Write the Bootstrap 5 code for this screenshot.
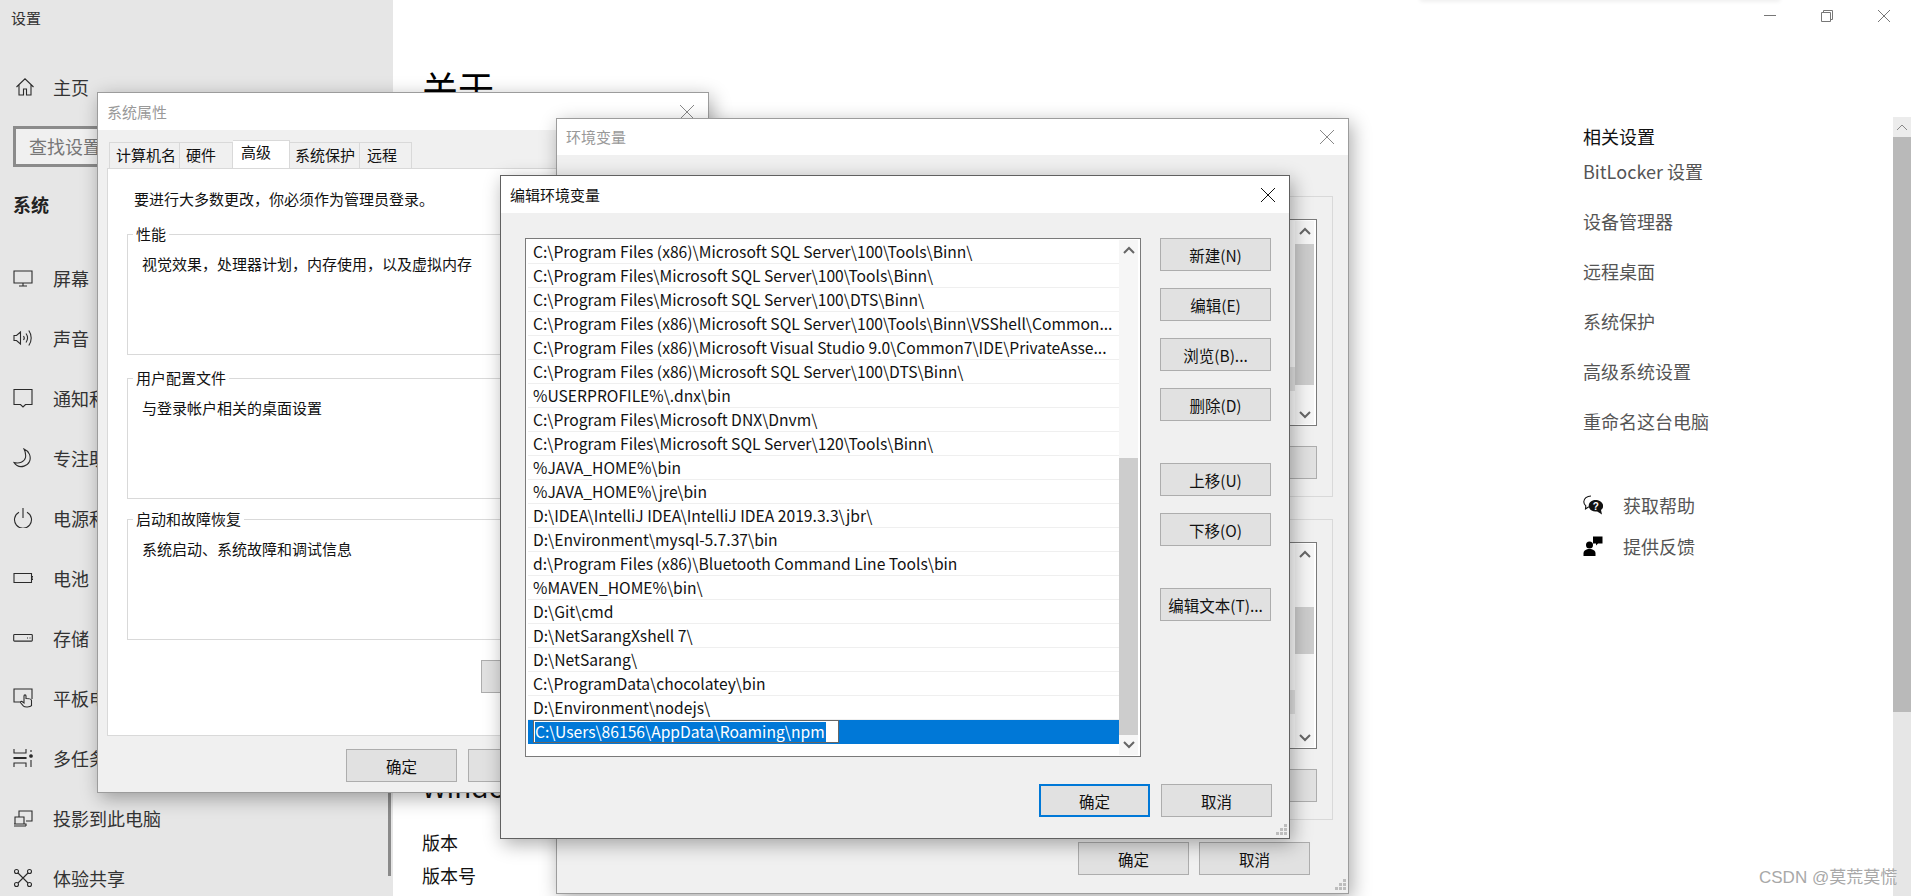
<!DOCTYPE html>
<html lang="zh-CN">
<head>
<meta charset="utf-8">
<title>设置</title>
<link href="https://cdn.jsdelivr.net/npm/bootstrap@5.3.0/dist/css/bootstrap.min.css" rel="stylesheet">
<style>
html,body{height:100%;margin:0;overflow:hidden}
body{font-family:"Noto Sans CJK SC","Liberation Sans",sans-serif;background:#fff;color:#111;font-size:15px;line-height:20px;position:relative}
svg{display:block;flex:none}
.ico{width:20px;height:20px;fill:none;stroke:#2b2b2b;stroke-width:1.1}

/* settings window */
.settings-win{height:896px;width:1911px}
.side-pane{width:393px;background:#e6e6e6;position:relative;color:#333;flex:none}
.side-caption{padding:8px 0 0 11px;height:48px}
.side-home{height:37px;margin-top:20px;padding-left:15px;font-size:18px;gap:18px}
.side-row{height:60px;padding-left:13px;font-size:18px;gap:20px}
.side-search{margin:21px 13px 0;height:41px;border:3px solid #8b8b8b;background:#f0f0f0;color:#777;font-size:18px;padding-left:13px;line-height:35px}
.side-head{font-size:18px;font-weight:700;margin:24px 0 0 13px;height:26px;line-height:26px;color:#222}
.side-list{margin-top:31px}
.side-thumb{position:absolute;left:388px;top:300px;width:3px;height:576px;background:#8a8a8a}
.main-pane{padding:67px 0 0 29px;color:#111}
.main-title{font-size:36px;line-height:40px;margin:0;font-weight:400;color:#000}
.main-sub{font-size:28px;line-height:36px;margin:661px 0 25px;font-weight:400}
.main-line{font-size:18px;line-height:27px;margin-bottom:6px}
.rel-pane{width:310px;flex:none;padding-top:123px;font-size:18px;line-height:26px;color:#555}
.rel-title{color:#111;margin-bottom:9px}
.rel-link{margin-bottom:24px}
.rel-help{margin-top:58px;gap:20px;margin-bottom:15px}
.rel-feedback{gap:20px}
.win-sb{width:18px;flex:none;margin-top:117px;background:#e6e6e6}
.win-sb-up{height:20px;background:#ececec}
.win-sb-thumb{height:575px;background:#b9b9b9}
.ctl-bar{position:absolute;top:10px;left:1764px;gap:45px}
.ctl-ico{width:12px;height:12px;fill:none;stroke:#777;stroke-width:1}
.top-edge{position:absolute;left:1420px;top:-3px;width:360px;height:3px;box-shadow:0 1px 4px rgba(0,0,0,.1)}
.watermark{position:absolute;left:1759px;top:866px;font-family:"Liberation Sans","Noto Sans CJK SC",sans-serif;font-size:17px;line-height:24px;color:#a8a8a8;white-space:nowrap}

/* dialogs */
.dlg{position:absolute;background:#f0f0f0;border:1px solid #9c9c9c;box-shadow:3px 5px 18px rgba(0,0,0,.33)}
.dlg-active{border-color:#606060}
.dlg-title{background:#fff;padding-left:9px;color:#999;flex:none}
.dlg-active .dlg-title{color:#111}
.dlg-x{width:14px;height:14px;fill:none;stroke:#888;stroke-width:1;margin-right:14px}
.dlg-active .dlg-x{stroke:#111}
.act-btn{width:111px;height:33px;padding:0;background:#e1e1e1;border:1px solid #adadad;border-radius:0;font-size:15.5px;line-height:20px;color:#111}
.act-btn-main{border:2px solid #0078d7}
.act-btn-wide{width:180px}
.grip{position:absolute;right:2px;bottom:2px;width:12px;height:12px;fill:#bdbdbd}

/* system properties */
.dlg-sys{left:97px;top:92px;width:612px;height:701px}
.dlg-sys .dlg-title{height:37px}
.sys-tabs{margin:10px 0 0 11px;height:28px;align-items:flex-end}
.sys-tab{height:26px;background:#f0f0f0;border:1px solid #d9d9d9;border-bottom:0;border-left-width:0;padding:2px 0 0 6px;color:#111;font-size:15px}
.sys-tab:first-child{border-left-width:1px}
.sys-tab:nth-child(1){width:71px}
.sys-tab:nth-child(2){width:53px}
.sys-tab:nth-child(3){width:57px;height:28px;background:#fff;padding:1px 0 0 8px}
.sys-tab:nth-child(4){width:70px;padding-left:5px}
.sys-tab:nth-child(5){width:52px;padding-left:7px}
.sys-panel{margin:0 8px 0 9px;height:568px;background:#fff;border:1px solid #d9d9d9;padding:20px 0 0 19px}
.sys-note{margin-left:7px;height:35px}
.grp{border:1px solid #d9d9d9;margin:0;padding:0;height:131px}
.grp legend{float:none;width:auto;margin:0 0 0 5px;padding:0 3px;font-size:15px;line-height:20px}
.grp-text{margin:10px 0 0 14px}
.grp-wrap:nth-child(3){margin-top:13px}
.grp-wrap:nth-child(4){margin-top:10px}
.sys-apply-row{padding:20px 0 0 354px}
.sys-foot{margin-top:13px;padding-left:248px;gap:11px}

/* environment */
.dlg-env{left:556px;top:118px;width:793px;height:776px}
.dlg-env .dlg-title{height:36px}
.env-body{padding:41px 15px 0 15px}
.env-grp{height:301px;border:1px solid #d9d9d9;padding:22px 15px 0 15px}
.env-grp + .env-grp{margin-top:22px}
.env-view{height:207px;background:#fff;border:1px solid #7a7a7a;padding:1px 2px 1px 0}
.env-view-rows{padding-top:146px}
.env-rowmark{height:24px;background:#e6e6e6}
.env-actions{margin-top:20px;gap:10px}
.env-foot{margin-top:22px;padding-right:23px;gap:10px}

/* edit */
.dlg-edit{left:500px;top:175px;width:790px;height:664px}
.dlg-edit .dlg-title{height:37px}
.edit-body{padding:25px 18px 0 24px;gap:19px}
.path-box{width:618px;height:519px;background:#fff;border:1px solid #7a7a7a;padding:1px 2px 1px 1px}
.path-rows{padding-left:0;margin:0;list-style:none;font-size:15.65px;min-width:0}
.path-row{height:24px;line-height:23px;border-bottom:1px solid #efefef;padding-left:5px;margin-left:1px;white-space:nowrap;overflow:hidden;color:#111}
.path-row-sel{background:#0078d7;border-bottom-color:#0078d7;padding-left:5px}
.path-input{display:inline-block;width:306px;height:23px;background:#fff;border:1px solid #666;padding:1px 0 0 1px;line-height:19px;vertical-align:top}
.path-input span{display:inline-block;background:#0078d7;color:#fff;height:20px;padding-right:1px}
.sb{width:19px;background:#f6f6f6}
.sb-arrow{height:20px}
.sb-arrow-low-a{margin-top:20px}
.sb-arrow-low-b{margin-top:74px}
.sb-gap-a{height:198px}
.sb-thumb{background:#cdcdcd}
.sb-thumb-env-a{height:141px;margin-top:3px}
.sb-thumb-env-b{height:47px;margin-top:43px}
.edit-actions{gap:17px}
.edit-actions .act-gap{margin-top:25px}
.edit-foot{margin-top:27px;padding-right:17px;gap:11px}
</style>
</head>
<body>

<div class="settings-win d-flex">
  <aside class="side-pane">
    <div class="side-caption">设置</div>
    <div class="side-home d-flex align-items-center">
      <svg class="ico" viewBox="0 0 20 20"><path d="M1.5 10 10 1.8 18.500 10M4 8v10h4.500v-6h3v6H16V8"/></svg>主页
    </div>
    <div class="side-search">查找设置</div>
    <div class="side-head">系统</div>
    <div class="side-list d-flex flex-column">
      <div class="side-row d-flex align-items-center"><svg class="ico" viewBox="0 0 20 20"><path d="M1 3h18v12H1zM10 15v3M6 18h8"/></svg>屏幕</div>
      <div class="side-row d-flex align-items-center"><svg class="ico" viewBox="0 0 20 20"><path d="M1 7.500h2.500L7.500 4v12L3.500 12.500H1zM10.500 8c1 1.300 1 2.800 0 4M13 5.500c2 2.800 2 6 0 9M15.800 2.500c3.200 4.500 3.200 10.500 0 15"/></svg>声音</div>
      <div class="side-row d-flex align-items-center"><svg class="ico" viewBox="0 0 20 20"><path d="M1 1.500h18v15h-6.500L10 19l-2.500-2.500H1z"/></svg>通知和操作</div>
      <div class="side-row d-flex align-items-center"><svg class="ico" viewBox="0 0 20 20"><path d="M11 1c5 2 7.500 7.500 5.500 12.500C14.500 18 8 20 4 17.500c-1.300-.7-2.300-1.700-3-3 5 1.500 10.500-.5 11.500-5 .5-3-.2-6-1.500-8.500z"/></svg>专注助手</div>
      <div class="side-row d-flex align-items-center"><svg class="ico" viewBox="0 0 20 20"><path d="M6 4.200a8.500 8.500 0 1 0 8 0M10 0v10"/></svg>电源和睡眠</div>
      <div class="side-row d-flex align-items-center"><svg class="ico" viewBox="0 0 20 20"><path d="M1 5.500h17.500v9H1zM18.500 8.500H20v3h-1.500"/></svg>电池</div>
      <div class="side-row d-flex align-items-center"><svg class="ico" viewBox="0 0 20 20"><path d="M1.500 6.500h17c.500 0 .800.300.800.800v5c0 .500-.300.800-.800.800h-17c-.500 0-.8-.300-.8-.8v-5c0-.500.300-.8.800-.8zM14 10h1M16.500 10h1"/></svg>存储</div>
      <div class="side-row d-flex align-items-center"><svg class="ico" viewBox="0 0 20 20"><path d="M8 14H1V1h18v10M11 8v7l-2-1.500c-1-.5-2 .5-1.200 1.500l2.700 3.200c1.200 1.200 6.500 1.200 8-.5V12.500c0-1.500-3-2-5.500-2V8c0-1.500-2-1.500-2 0z"/></svg>平板电脑</div>
      <div class="side-row d-flex align-items-center"><svg class="ico" viewBox="0 0 20 20"><path d="M1 1v4h12V1M1 19v-4h12v4M1 9.500v1h12v-1zM18 2v2M18 12v7"/><circle cx="18" cy="8" r="1.300" fill="#2b2b2b"/></svg>多任务处理</div>
      <div class="side-row d-flex align-items-center"><svg class="ico" viewBox="0 0 20 20"><path d="M6 9V3h13v10h-6M1 18h12M2 16V9h9v7M1 16h12v2"/></svg>投影到此电脑</div>
      <div class="side-row d-flex align-items-center"><svg class="ico" viewBox="0 0 20 20"><circle cx="3.500" cy="3.500" r="2"/><circle cx="16.500" cy="3.500" r="2"/><circle cx="3.500" cy="16.500" r="2"/><circle cx="16.500" cy="16.500" r="2"/><path d="M5 5l10 10M15 5 5 15"/></svg>体验共享</div>
    </div>
    <div class="side-thumb"></div>
  </aside>

  <main class="main-pane flex-grow-1">
    <h1 class="main-title">关于</h1>
    <h2 class="main-sub">Windows 规格</h2>
    <div class="main-line">版本</div>
    <div class="main-line">版本号</div>
  </main>

  <section class="rel-pane">
    <div class="rel-title">相关设置</div>
    <div class="rel-link">BitLocker 设置</div>
    <div class="rel-link">设备管理器</div>
    <div class="rel-link">远程桌面</div>
    <div class="rel-link">系统保护</div>
    <div class="rel-link">高级系统设置</div>
    <div class="rel-link">重命名这台电脑</div>
    <div class="rel-help d-flex align-items-center">
      <svg width="20" height="20" viewBox="0 0 20 20"><path d="M8 1C4 1 .800 3.500.800 6.800c0 1.600.8 3 2 4L2.500 14l3.300-2.200" fill="none" stroke="#111" stroke-width="1.100"/><path d="M12.500 5c-3.800 0-6.800 2.600-6.800 5.800s3 5.800 6.800 5.800c.6 0 1.100 0 1.700-.2l4.800 3-1-4.300c1.400-1.100 2.200-2.600 2.200-4.300C20 7.600 16.300 5 12.500 5z" fill="#111"/><text x="12.700" y="14.500" font-size="10" font-weight="700" text-anchor="middle" fill="#fff" font-family="Liberation Sans">?</text></svg>
      <span>获取帮助</span>
    </div>
    <div class="rel-feedback d-flex align-items-center">
      <svg width="20" height="20" viewBox="0 0 20 20" fill="#000"><circle cx="6.500" cy="9" r="3.500"/><path d="M.5 20v-2.500c0-2.800 2.500-4.500 6-4.500s6 1.700 6 4.500V20z"/><path d="M10 .5h9.500v7H15l-2 2v-2h-3z"/></svg>
      <span>提供反馈</span>
    </div>
  </section>

  <div class="win-sb">
    <div class="win-sb-up d-flex align-items-center justify-content-center"><svg width="12" height="8" viewBox="0 0 12 8" fill="none" stroke="#888" stroke-width="1"><path d="M1 7l5-5 5 5"/></svg></div>
    <div class="win-sb-thumb"></div>
  </div>
</div>

<div class="ctl-bar d-flex">
  <svg class="ctl-ico" viewBox="0 0 12 12"><path d="M0 5.500h12"/></svg>
  <svg class="ctl-ico" viewBox="0 0 12 12"><path d="M.5 2.500h9v9h-9zM2.500 2.500V.5h9v9h-2"/></svg>
  <svg class="ctl-ico" viewBox="0 0 12 12"><path d="M0 0l12 12M12 0 0 12"/></svg>
</div>
<div class="top-edge"></div>

<!-- 系统属性 -->
<div class="dlg dlg-sys d-flex flex-column">
  <div class="dlg-title d-flex align-items-center justify-content-between">
    <span>系统属性</span>
    <svg class="dlg-x" viewBox="0 0 14 14"><path d="M0 0l14 14M14 0 0 14"/></svg>
  </div>
  <div class="sys-tabs d-flex">
    <div class="sys-tab">计算机名</div>
    <div class="sys-tab">硬件</div>
    <div class="sys-tab">高级</div>
    <div class="sys-tab">系统保护</div>
    <div class="sys-tab">远程</div>
  </div>
  <div class="sys-panel">
    <div class="sys-note">要进行大多数更改，你必须作为管理员登录。</div>
    <div class="grp-wrap">
      <fieldset class="grp"><legend>性能</legend><div class="grp-text">视觉效果，处理器计划，内存使用，以及虚拟内存</div></fieldset>
    </div>
    <div class="grp-wrap">
      <fieldset class="grp"><legend>用户配置文件</legend><div class="grp-text">与登录帐户相关的桌面设置</div></fieldset>
    </div>
    <div class="grp-wrap">
      <fieldset class="grp"><legend>启动和故障恢复</legend><div class="grp-text">系统启动、系统故障和调试信息</div></fieldset>
    </div>
    <div class="sys-apply-row d-flex">
      <button class="btn act-btn act-btn-wide">环境变量(N)...</button>
    </div>
  </div>
  <div class="sys-foot d-flex">
    <button class="btn act-btn">确定</button>
    <button class="btn act-btn">取消</button>
  </div>
</div>

<!-- 环境变量 -->
<div class="dlg dlg-env d-flex flex-column">
  <div class="dlg-title d-flex align-items-center justify-content-between">
    <span>环境变量</span>
    <svg class="dlg-x" viewBox="0 0 14 14"><path d="M0 0l14 14M14 0 0 14"/></svg>
  </div>
  <div class="env-body">
    <div class="env-grp">
      <div class="env-view d-flex">
        <div class="flex-grow-1 env-view-rows"><div class="env-rowmark"></div></div>
        <div class="sb">
          <div class="sb-arrow d-flex align-items-center justify-content-center"><svg width="12" height="8" viewBox="0 0 12 8"><path d="M1 7l5-5 5 5" fill="none" stroke="#666" stroke-width="2"/></svg></div>
          <div class="sb-thumb sb-thumb-env-a"></div>
          <div class="sb-arrow sb-arrow-low-a d-flex align-items-center justify-content-center"><svg width="12" height="8" viewBox="0 0 12 8"><path d="M1 1l5 5 5-5" fill="none" stroke="#666" stroke-width="2"/></svg></div>
        </div>
      </div>
      <div class="env-actions d-flex justify-content-end"><button class="btn act-btn">新建(N)</button></div>
    </div>
    <div class="env-grp">
      <div class="env-view d-flex">
        <div class="flex-grow-1 env-view-rows"><div class="env-rowmark"></div></div>
        <div class="sb">
          <div class="sb-arrow d-flex align-items-center justify-content-center"><svg width="12" height="8" viewBox="0 0 12 8"><path d="M1 7l5-5 5 5" fill="none" stroke="#666" stroke-width="2"/></svg></div>
          <div class="sb-thumb sb-thumb-env-b"></div>
          <div class="sb-arrow sb-arrow-low-b d-flex align-items-center justify-content-center"><svg width="12" height="8" viewBox="0 0 12 8"><path d="M1 1l5 5 5-5" fill="none" stroke="#666" stroke-width="2"/></svg></div>
        </div>
      </div>
      <div class="env-actions d-flex justify-content-end"><button class="btn act-btn">新建(W)</button></div>
    </div>
    <div class="env-foot d-flex justify-content-end">
      <button class="btn act-btn">确定</button>
      <button class="btn act-btn">取消</button>
    </div>
  </div>
  <svg class="grip" viewBox="0 0 12 12"><path d="M9 0h3v3H9zM5 4h3v3H5zM9 4h3v3H9zM1 8h3v3H1zM5 8h3v3H5zM9 8h3v3H9z"/></svg>
</div>

<!-- 编辑环境变量 -->
<div class="dlg dlg-active dlg-edit d-flex flex-column">
  <div class="dlg-title d-flex align-items-center justify-content-between">
    <span>编辑环境变量</span>
    <svg class="dlg-x" viewBox="0 0 14 14"><path d="M0 0l14 14M14 0 0 14"/></svg>
  </div>
  <div class="edit-body d-flex">
    <div class="path-box d-flex">
      <ul class="path-rows flex-grow-1">
        <li class="path-row">C:\Program Files (x86)\Microsoft SQL Server\100\Tools\Binn\</li>
        <li class="path-row">C:\Program Files\Microsoft SQL Server\100\Tools\Binn\</li>
        <li class="path-row">C:\Program Files\Microsoft SQL Server\100\DTS\Binn\</li>
        <li class="path-row">C:\Program Files (x86)\Microsoft SQL Server\100\Tools\Binn\VSShell\Common...</li>
        <li class="path-row">C:\Program Files (x86)\Microsoft Visual Studio 9.0\Common7\IDE\PrivateAsse...</li>
        <li class="path-row">C:\Program Files (x86)\Microsoft SQL Server\100\DTS\Binn\</li>
        <li class="path-row">%USERPROFILE%\.dnx\bin</li>
        <li class="path-row">C:\Program Files\Microsoft DNX\Dnvm\</li>
        <li class="path-row">C:\Program Files\Microsoft SQL Server\120\Tools\Binn\</li>
        <li class="path-row">%JAVA_HOME%\bin</li>
        <li class="path-row">%JAVA_HOME%\jre\bin</li>
        <li class="path-row">D:\IDEA\IntelliJ IDEA\IntelliJ IDEA 2019.3.3\jbr\</li>
        <li class="path-row">D:\Environment\mysql-5.7.37\bin</li>
        <li class="path-row">d:\Program Files (x86)\Bluetooth Command Line Tools\bin</li>
        <li class="path-row">%MAVEN_HOME%\bin\</li>
        <li class="path-row">D:\Git\cmd</li>
        <li class="path-row">D:\NetSarangXshell 7\</li>
        <li class="path-row">D:\NetSarang\</li>
        <li class="path-row">C:\ProgramData\chocolatey\bin</li>
        <li class="path-row">D:\Environment\nodejs\</li>
        <li class="path-row path-row-sel"><span class="path-input"><span>C:\Users\86156\AppData\Roaming\npm</span></span></li>
      </ul>
      <div class="sb d-flex flex-column">
        <div class="sb-arrow d-flex align-items-center justify-content-center"><svg width="12" height="8" viewBox="0 0 12 8"><path d="M1 7l5-5 5 5" fill="none" stroke="#666" stroke-width="2"/></svg></div>
        <div class="sb-gap-a"></div>
        <div class="sb-thumb flex-grow-1"></div>
        <div class="sb-arrow d-flex align-items-center justify-content-center"><svg width="12" height="8" viewBox="0 0 12 8"><path d="M1 1l5 5 5-5" fill="none" stroke="#666" stroke-width="2"/></svg></div>
      </div>
    </div>
    <div class="edit-actions d-flex flex-column">
      <button class="btn act-btn">新建(N)</button>
      <button class="btn act-btn">编辑(E)</button>
      <button class="btn act-btn">浏览(B)...</button>
      <button class="btn act-btn">删除(D)</button>
      <button class="btn act-btn act-gap">上移(U)</button>
      <button class="btn act-btn">下移(O)</button>
      <button class="btn act-btn act-gap">编辑文本(T)...</button>
    </div>
  </div>
  <div class="edit-foot d-flex justify-content-end">
    <button class="btn act-btn act-btn-main">确定</button>
    <button class="btn act-btn">取消</button>
  </div>
  <svg class="grip" viewBox="0 0 12 12"><path d="M9 0h3v3H9zM5 4h3v3H5zM9 4h3v3H9zM1 8h3v3H1zM5 8h3v3H5zM9 8h3v3H9z"/></svg>
</div>

<div class="watermark">CSDN @莫荒莫慌</div>

<script src="https://cdn.jsdelivr.net/npm/bootstrap@5.3.0/dist/js/bootstrap.bundle.min.js"></script>
</body>
</html>
